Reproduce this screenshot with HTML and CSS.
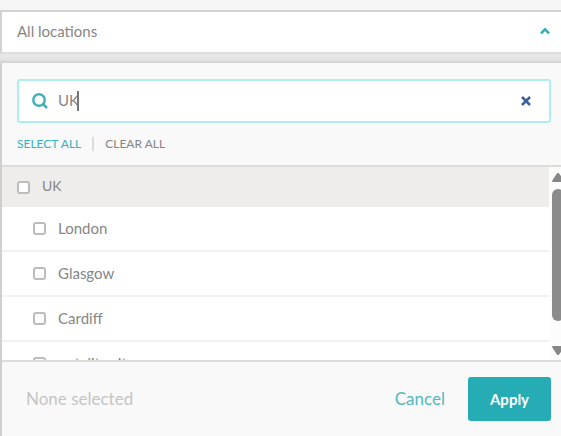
FILE: index.html
```html
<!DOCTYPE html>
<html lang="en">
<head>
  <meta charset="UTF-8">
  <meta name="viewport" content="width=device-width, initial-scale=1">
  <title>Locations</title>
  <link rel="stylesheet" href="styles.css">
</head>
<body>
  <button class="location-toggle" type="button" aria-expanded="true">
    <span>All locations</span>
    <svg class="chevron" viewBox="0 0 10 8" aria-hidden="true"><path d="M1 6.3 5 2.3 9 6.3"/></svg>
  </button>

  <form class="panel">
    <div class="panel-head">
      <div class="search">
        <svg class="search-icon" viewBox="0 0 16 16" aria-hidden="true"><circle cx="7" cy="7" r="5.7"/><path d="M11 11l4 4"/></svg>
        <input class="search-input" type="text" value="UK" aria-label="Search locations">
        <span class="caret"></span>
        <button class="clear" type="button" aria-label="Clear search">
          <svg viewBox="0 0 10 10" aria-hidden="true"><path d="M1 1l8 8M9 1 1 9"/></svg>
        </button>
      </div>
      <div class="links">
        <button class="link teal" type="button">SELECT ALL</button>
        <span class="divider"></span>
        <button class="link" type="button">CLEAR ALL</button>
      </div>
    </div>

    <div class="results">
      <div class="list">
        <label class="row group"><input type="checkbox"><span>UK</span></label>
        <label class="row"><input type="checkbox"><span>London</span></label>
        <label class="row"><input type="checkbox"><span>Glasgow</span></label>
        <label class="row"><input type="checkbox"><span>Cardiff</span></label>
        <label class="row"><input type="checkbox"><span>notality sit</span></label>
      </div>
      <div class="scrollbar" aria-hidden="true">
        <svg class="arrow" viewBox="0 0 12 10"><path d="M6 0q1 0 1.500 1L12 8q0 1-1 1H1Q0 9 0 8l4.500-7Q5 0 6 0z"/></svg>
        <div class="thumb"></div>
        <svg class="arrow down" viewBox="0 0 12 10"><path d="M6 9q-1 0-1.500-1L0 1q0-1 1-1h10q1 0 1 1L7.500 8Q7 9 6 9z"/></svg>
      </div>
    </div>

    <div class="panel-foot">
      <span class="status">None selected</span>
      <button class="cancel" type="button">Cancel</button>
      <button class="apply" type="button">Apply</button>
    </div>
  </form>
</body>
</html>
```
FILE: styles.css
```css
* {
  box-sizing: border-box;
}

body {
  margin: 0;
  padding-top: 10px;
  background: #f5f5f5;
  color: #858585;
  font-family: Lato, "Open Sans", sans-serif;
  font-size: 15px;
  line-height: 20px;
  overflow: hidden;
}

button {
  margin: 0;
  padding: 0;
  border: none;
  background: none;
  color: inherit;
  font: inherit;
  cursor: pointer;
}

svg {
  display: block;
  fill: none;
}

.location-toggle {
  display: flex;
  align-items: center;
  justify-content: space-between;
  width: 100%;
  height: 44px;
  padding: 0 11px 2px 15px;
  border: 2px solid #d2d2d2;
  border-right: none;
  border-bottom-color: #dedede;
  background: #fff;
}

.chevron {
  width: 10px;
  height: 8px;
  stroke: #35aeb6;
  stroke-width: 2.5;
}

.panel {
  margin: 0;
  border-left: 2px solid #cfcfcf;
  background: #f9f9f9;
}

/* shadow strip between the field and the open panel */
.panel::before {
  content: "";
  display: block;
  height: 9px;
  margin-left: -2px;
  background: linear-gradient(#e8e8e8, #e4e4e4 60%, #cfcfcf);
}

.panel-head {
  padding: 16px 10px 11px 15px;
  border-bottom: 2px solid #dcdcdb;
}

.search {
  position: relative;
  display: flex;
  align-items: center;
  gap: 10px;
  height: 44px;
  padding: 0 18px 0 13px;
  border: 2px solid #aeeeee;
  border-radius: 3px;
  background: #fff;
}

.search-icon {
  width: 16px;
  height: 16px;
  stroke: #42b1b9;
  stroke-width: 2.5;
}

.search-input {
  flex: 1;
  min-width: 0;
  padding: 0 0 2px;
  border: none;
  outline: none;
  background: none;
  color: #858585;
  font: inherit;
}

.caret {
  position: absolute;
  left: 58px;
  top: 10px;
  width: 2px;
  height: 20px;
  background: #777;
}

.clear svg {
  width: 10px;
  height: 10px;
  stroke: #3d5f9c;
  stroke-width: 2.5;
}

.links {
  display: flex;
  align-items: center;
  gap: 11px;
  margin-top: 11px;
  font-size: 12px;
}

.teal {
  color: #35b2b9;
}

.divider {
  width: 2px;
  height: 14px;
  background: #dcdcdc;
}

.results {
  display: flex;
  height: 193px;
  overflow: hidden;
  background: #fff;
}

.list {
  flex: 1;
}

.row {
  display: flex;
  align-items: center;
  gap: 12px;
  height: 45px;
  padding-left: 31px;
  border-bottom: 2px solid #f2f1f1;
}

.row span {
  padding-bottom: 2px;
}

.row input {
  appearance: none;
  width: 13px;
  height: 13px;
  margin: 0;
  border: 2px solid #bcbcbc;
  border-radius: 3px;
  background: #fff;
}

.group {
  height: 40px;
  padding-left: 15px;
  border-bottom: none;
  background: #eeedeb;
  font-size: 14px;
}

.scrollbar {
  display: flex;
  flex-direction: column;
  width: 12px;
  padding: 6px 0 4px 3px;
  overflow: hidden;
  background: #fcfcfc;
}

.arrow {
  flex: none;
  width: 12px;
  height: 10px;
  fill: #868686;
}

.down {
  margin-top: auto;
}

.thumb {
  width: 12px;
  height: 132px;
  margin-top: 6px;
  border-radius: 6px;
  background: #8b8b8b;
}

.panel-foot {
  display: flex;
  align-items: center;
  height: 76px;
  padding: 0 10px 0 24px;
  border-top: 2px solid #dcdcdc;
  font-size: 17px;
}

.status {
  flex: 1;
  color: #c5c5c5;
}

.cancel {
  margin-right: 23px;
  color: #50bbc1;
}

.apply {
  width: 83px;
  height: 44px;
  border-radius: 3px;
  background: #26acb4;
  color: #fff;
  font-size: 15px;
  font-weight: bold;
}
```
